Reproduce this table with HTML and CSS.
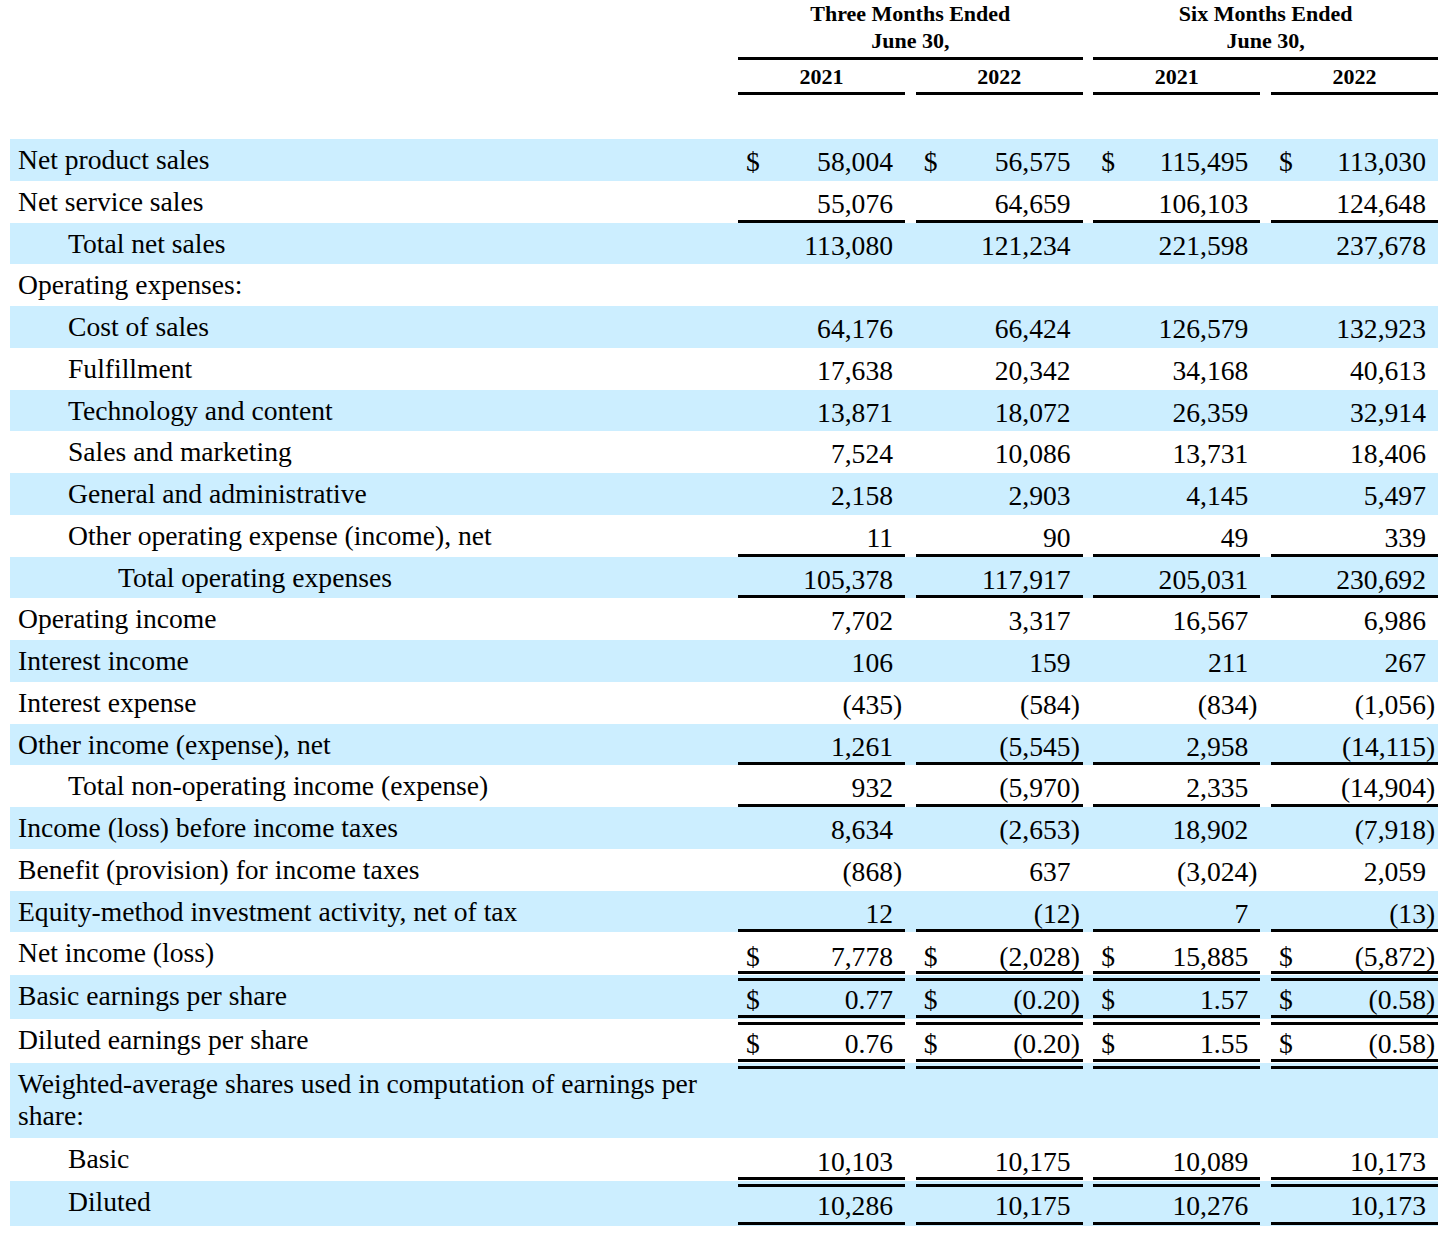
FILE: index.html
```html
<!DOCTYPE html>
<html lang="en">
<head>
<meta charset="utf-8">
<title>Consolidated Statements of Operations</title>
<link rel="stylesheet" href="styles.css">
</head>
<body>
<div class="sheet">
  <div class="head">
    <div></div>
    <div class="period">Three Months Ended<br>June 30,</div>
    <div class="period">Six Months Ended<br>June 30,</div>
  </div>
  <div class="head years">
    <div></div>
    <div class="yr">2021</div>
    <div class="yr">2022</div>
    <div class="yr">2021</div>
    <div class="yr">2022</div>
  </div>

  <div class="row blue">
    <div class="lab">Net product sales</div>
    <div class="num"><span class="d">$</span><span class="v">58,004</span><span class="p"></span></div>
    <div class="num"><span class="d">$</span><span class="v">56,575</span><span class="p"></span></div>
    <div class="num"><span class="d">$</span><span class="v">115,495</span><span class="p"></span></div>
    <div class="num"><span class="d">$</span><span class="v">113,030</span><span class="p"></span></div>
  </div>
  <div class="row u1">
    <div class="lab">Net service sales</div>
    <div class="num"><span class="v">55,076</span><span class="p"></span></div>
    <div class="num"><span class="v">64,659</span><span class="p"></span></div>
    <div class="num"><span class="v">106,103</span><span class="p"></span></div>
    <div class="num"><span class="v">124,648</span><span class="p"></span></div>
  </div>
  <div class="row blue">
    <div class="lab i1">Total net sales</div>
    <div class="num"><span class="v">113,080</span><span class="p"></span></div>
    <div class="num"><span class="v">121,234</span><span class="p"></span></div>
    <div class="num"><span class="v">221,598</span><span class="p"></span></div>
    <div class="num"><span class="v">237,678</span><span class="p"></span></div>
  </div>
  <div class="row">
    <div class="lab">Operating expenses:</div>
    <div></div><div></div><div></div><div></div>
  </div>
  <div class="row blue">
    <div class="lab i1">Cost of sales</div>
    <div class="num"><span class="v">64,176</span><span class="p"></span></div>
    <div class="num"><span class="v">66,424</span><span class="p"></span></div>
    <div class="num"><span class="v">126,579</span><span class="p"></span></div>
    <div class="num"><span class="v">132,923</span><span class="p"></span></div>
  </div>
  <div class="row">
    <div class="lab i1">Fulfillment</div>
    <div class="num"><span class="v">17,638</span><span class="p"></span></div>
    <div class="num"><span class="v">20,342</span><span class="p"></span></div>
    <div class="num"><span class="v">34,168</span><span class="p"></span></div>
    <div class="num"><span class="v">40,613</span><span class="p"></span></div>
  </div>
  <div class="row blue">
    <div class="lab i1">Technology and content</div>
    <div class="num"><span class="v">13,871</span><span class="p"></span></div>
    <div class="num"><span class="v">18,072</span><span class="p"></span></div>
    <div class="num"><span class="v">26,359</span><span class="p"></span></div>
    <div class="num"><span class="v">32,914</span><span class="p"></span></div>
  </div>
  <div class="row">
    <div class="lab i1">Sales and marketing</div>
    <div class="num"><span class="v">7,524</span><span class="p"></span></div>
    <div class="num"><span class="v">10,086</span><span class="p"></span></div>
    <div class="num"><span class="v">13,731</span><span class="p"></span></div>
    <div class="num"><span class="v">18,406</span><span class="p"></span></div>
  </div>
  <div class="row blue">
    <div class="lab i1">General and administrative</div>
    <div class="num"><span class="v">2,158</span><span class="p"></span></div>
    <div class="num"><span class="v">2,903</span><span class="p"></span></div>
    <div class="num"><span class="v">4,145</span><span class="p"></span></div>
    <div class="num"><span class="v">5,497</span><span class="p"></span></div>
  </div>
  <div class="row u1">
    <div class="lab i1">Other operating expense (income), net</div>
    <div class="num"><span class="v">11</span><span class="p"></span></div>
    <div class="num"><span class="v">90</span><span class="p"></span></div>
    <div class="num"><span class="v">49</span><span class="p"></span></div>
    <div class="num"><span class="v">339</span><span class="p"></span></div>
  </div>
  <div class="row blue u1">
    <div class="lab i2">Total operating expenses</div>
    <div class="num"><span class="v">105,378</span><span class="p"></span></div>
    <div class="num"><span class="v">117,917</span><span class="p"></span></div>
    <div class="num"><span class="v">205,031</span><span class="p"></span></div>
    <div class="num"><span class="v">230,692</span><span class="p"></span></div>
  </div>
  <div class="row">
    <div class="lab">Operating income</div>
    <div class="num"><span class="v">7,702</span><span class="p"></span></div>
    <div class="num"><span class="v">3,317</span><span class="p"></span></div>
    <div class="num"><span class="v">16,567</span><span class="p"></span></div>
    <div class="num"><span class="v">6,986</span><span class="p"></span></div>
  </div>
  <div class="row blue">
    <div class="lab">Interest income</div>
    <div class="num"><span class="v">106</span><span class="p"></span></div>
    <div class="num"><span class="v">159</span><span class="p"></span></div>
    <div class="num"><span class="v">211</span><span class="p"></span></div>
    <div class="num"><span class="v">267</span><span class="p"></span></div>
  </div>
  <div class="row">
    <div class="lab">Interest expense</div>
    <div class="num"><span class="v">(435</span><span class="p">)</span></div>
    <div class="num"><span class="v">(584</span><span class="p">)</span></div>
    <div class="num"><span class="v">(834</span><span class="p">)</span></div>
    <div class="num"><span class="v">(1,056</span><span class="p">)</span></div>
  </div>
  <div class="row blue u1">
    <div class="lab">Other income (expense), net</div>
    <div class="num"><span class="v">1,261</span><span class="p"></span></div>
    <div class="num"><span class="v">(5,545</span><span class="p">)</span></div>
    <div class="num"><span class="v">2,958</span><span class="p"></span></div>
    <div class="num"><span class="v">(14,115</span><span class="p">)</span></div>
  </div>
  <div class="row u1">
    <div class="lab i1">Total non-operating income (expense)</div>
    <div class="num"><span class="v">932</span><span class="p"></span></div>
    <div class="num"><span class="v">(5,970</span><span class="p">)</span></div>
    <div class="num"><span class="v">2,335</span><span class="p"></span></div>
    <div class="num"><span class="v">(14,904</span><span class="p">)</span></div>
  </div>
  <div class="row blue">
    <div class="lab">Income (loss) before income taxes</div>
    <div class="num"><span class="v">8,634</span><span class="p"></span></div>
    <div class="num"><span class="v">(2,653</span><span class="p">)</span></div>
    <div class="num"><span class="v">18,902</span><span class="p"></span></div>
    <div class="num"><span class="v">(7,918</span><span class="p">)</span></div>
  </div>
  <div class="row">
    <div class="lab">Benefit (provision) for income taxes</div>
    <div class="num"><span class="v">(868</span><span class="p">)</span></div>
    <div class="num"><span class="v">637</span><span class="p"></span></div>
    <div class="num"><span class="v">(3,024</span><span class="p">)</span></div>
    <div class="num"><span class="v">2,059</span><span class="p"></span></div>
  </div>
  <div class="row blue u1">
    <div class="lab">Equity-method investment activity, net of tax</div>
    <div class="num"><span class="v">12</span><span class="p"></span></div>
    <div class="num"><span class="v">(12</span><span class="p">)</span></div>
    <div class="num"><span class="v">7</span><span class="p"></span></div>
    <div class="num"><span class="v">(13</span><span class="p">)</span></div>
  </div>
  <div class="row u2 r43">
    <div class="lab">Net income (loss)</div>
    <div class="num"><span class="d">$</span><span class="v">7,778</span><span class="p"></span></div>
    <div class="num"><span class="d">$</span><span class="v">(2,028</span><span class="p">)</span></div>
    <div class="num"><span class="d">$</span><span class="v">15,885</span><span class="p"></span></div>
    <div class="num"><span class="d">$</span><span class="v">(5,872</span><span class="p">)</span></div>
  </div>
  <div class="row blue u2 r44">
    <div class="lab">Basic earnings per share</div>
    <div class="num"><span class="d">$</span><span class="v">0.77</span><span class="p"></span></div>
    <div class="num"><span class="d">$</span><span class="v">(0.20</span><span class="p">)</span></div>
    <div class="num"><span class="d">$</span><span class="v">1.57</span><span class="p"></span></div>
    <div class="num"><span class="d">$</span><span class="v">(0.58</span><span class="p">)</span></div>
  </div>
  <div class="row u2 r44">
    <div class="lab">Diluted earnings per share</div>
    <div class="num"><span class="d">$</span><span class="v">0.76</span><span class="p"></span></div>
    <div class="num"><span class="d">$</span><span class="v">(0.20</span><span class="p">)</span></div>
    <div class="num"><span class="d">$</span><span class="v">1.55</span><span class="p"></span></div>
    <div class="num"><span class="d">$</span><span class="v">(0.58</span><span class="p">)</span></div>
  </div>
  <div class="row blue wrap">
    <div class="lab">Weighted-average shares used in computation of earnings per share:</div>
    <div></div><div></div><div></div><div></div>
  </div>
  <div class="row u2 r43 shares">
    <div class="lab i1">Basic</div>
    <div class="num"><span class="v">10,103</span><span class="p"></span></div>
    <div class="num"><span class="v">10,175</span><span class="p"></span></div>
    <div class="num"><span class="v">10,089</span><span class="p"></span></div>
    <div class="num"><span class="v">10,173</span><span class="p"></span></div>
  </div>
  <div class="row blue u2 r45">
    <div class="lab i1">Diluted</div>
    <div class="num"><span class="v">10,286</span><span class="p"></span></div>
    <div class="num"><span class="v">10,175</span><span class="p"></span></div>
    <div class="num"><span class="v">10,276</span><span class="p"></span></div>
    <div class="num"><span class="v">10,173</span><span class="p"></span></div>
  </div>
</div>
</body>
</html>
```

FILE: styles.css
```css
html, body {
  margin: 0;
  padding: 0;
  background: #ffffff;
}

body {
  font-family: "Liberation Serif", "Times New Roman", serif;
  color: #000000;
}

.sheet {
  width: 1428px;
  padding: 0 6px 0 10px;
}

.head {
  display: grid;
  grid-template-columns: 717.33px 167px 167px 167px 167px;
  column-gap: 10.67px;
  font-weight: bold;
  font-size: 22px;
  line-height: 27px;
  text-align: center;
}

.period {
  grid-column: span 2;
  padding-bottom: 3px;
  border-bottom: 3px solid #000;
}

.yr {
  padding: 3px 0 2px;
  border-bottom: 3px solid #000;
}

.years {
  margin-bottom: 44px;
}

.row {
  display: grid;
  grid-template-columns: 717.33px 167px 167px 167px 167px;
  grid-template-rows: minmax(0, 1fr);
  column-gap: 10.67px;
  height: 41.75px;
  font-size: 27.6px;
  line-height: 41.75px;
}

.row > div {
  box-sizing: border-box;
}

.blue {
  background: #cceeff;
}

.lab {
  padding-left: 8px;
  white-space: nowrap;
}

.i1 {
  padding-left: 58px;
}

.i2 {
  padding-left: 108px;
}

.num {
  display: flex;
  padding: 2px 2px 0 8px;
}

.num .v {
  margin-left: auto;
}

.num .p {
  width: 10px;
}

.u1 .num {
  border-bottom: 3px solid #000;
}

.u2 .num {
  padding-top: 4px;
  margin-bottom: -5.5px;
  border-bottom: 10px double #000;
}

.shares .num {
  padding-top: 2.5px;
}

.r43 {
  height: 43px;
}

.r44 {
  height: 44px;
}

.r45 {
  height: 45px;
}

.wrap {
  height: 75px;
}

.wrap .lab {
  white-space: normal;
  line-height: 32px;
  padding-top: 5px;
  padding-right: 10px;
}
```
